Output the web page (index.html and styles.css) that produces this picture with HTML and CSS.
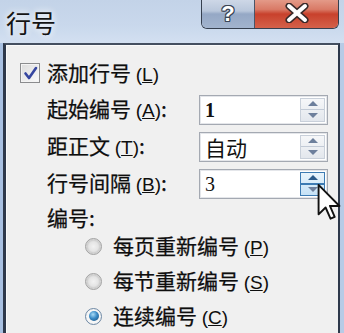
FILE: index.html
```html
<!DOCTYPE html>
<html lang="zh">
<head>
<meta charset="utf-8">
<link rel="stylesheet" href="styles.css">
</head>
<body>
<div class="window">
  <div class="titlebar">
    <span class="title">行号</span>
    <div class="caption-btns">
      <div class="cbtn help"><span class="qmark">?</span></div>
      <div class="cbtn close">
        <svg width="26" height="20" viewBox="0 0 26 20"><path d="M5 3 L21 17 M21 3 L5 17" stroke="#3a2a2a" stroke-width="7" stroke-linecap="round"/><path d="M5 3 L21 17 M21 3 L5 17" stroke="#fff" stroke-width="4" stroke-linecap="round"/></svg>
      </div>
    </div>
  </div>
  <div class="client">
    <div class="check-row">
      <span class="checkbox"><svg width="17" height="17" viewBox="0 0 17 17"><path d="M3.5 8.5 L7 13 L14 3" fill="none" stroke="#3646a0" stroke-width="2.6" stroke-linecap="round" stroke-linejoin="round"/></svg></span>
      <span class="txt">添加行号 <span class="acc">(<u>L</u>)</span></span>
    </div>
    <div class="fields">
      <div class="field">
        <span class="lbl">起始编号 <span class="acc">(<u>A</u>)</span>:</span>
        <div class="spinbox"><span class="val num">1</span><span class="spinner"><span class="up"></span><span class="down"></span></span></div>
      </div>
      <div class="field">
        <span class="lbl">距正文 <span class="acc">(<u>T</u>)</span>:</span>
        <div class="spinbox"><span class="val">自动</span><span class="spinner"><span class="up"></span><span class="down"></span></span></div>
      </div>
      <div class="field">
        <span class="lbl">行号间隔 <span class="acc">(<u>B</u>)</span>:</span>
        <div class="spinbox"><span class="val num thin">3</span><span class="spinner hot"><span class="up"></span><span class="down"></span></span></div>
      </div>
    </div>
    <div class="section">编号:</div>
    <div class="radios">
      <div class="radio-row"><span class="radio"></span><span class="txt">每页重新编号 <span class="acc">(<u>P</u>)</span></span></div>
      <div class="radio-row"><span class="radio"></span><span class="txt">每节重新编号 <span class="acc">(<u>S</u>)</span></span></div>
      <div class="radio-row"><span class="radio on"></span><span class="txt">连续编号 <span class="acc">(<u>C</u>)</span></span></div>
    </div>
  </div>
  <svg class="cursor" width="24" height="36" viewBox="0 0 12 19"><path d="M0.5 0.5 L0.5 16 L4.2 12.4 L6.8 18.3 L9 17.3 L6.5 11.6 L11.5 11.6 Z" fill="#fff" stroke="#111" stroke-width="1" stroke-linejoin="round"/></svg>
</div>
</body>
</html>
```

FILE: styles.css
```css
html, body {
  margin: 0;
  padding: 0;
  background: #f0f0f0;
}

.window {
  position: relative;
  width: 344px;
  height: 333px;
  overflow: hidden;
  display: flex;
  flex-direction: column;
  background: linear-gradient(90deg, #a9c1e2, #b7cbe6);
  font-family: "Noto Sans CJK SC", "Noto Sans", sans-serif;
  color: #0e0e0e;
}

.titlebar {
  height: 43px;
  flex: none;
  display: flex;
  justify-content: space-between;
  align-items: flex-start;
  padding: 0 5px 0 6px;
  background: linear-gradient(180deg, #c3d3e8 0%, #c9d8ec 60%, #d3e0f1 100%);
}

.title {
  margin-top: 8px;
  font-size: 25px;
  line-height: 28px;
  color: #141414;
  text-shadow: 0 0 6px rgba(255, 255, 255, 0.9), 0 0 10px rgba(255, 255, 255, 0.6);
}

.caption-btns {
  display: flex;
  margin-top: -3px;
  height: 31px;
  border: 1px solid #36404f;
  border-top: none;
  border-radius: 0 0 6px 6px;
  overflow: hidden;
}

.cbtn {
  display: flex;
  align-items: center;
  justify-content: center;
}

.cbtn.help {
  width: 52px;
  border-right: 1px solid #4a5568;
  background: linear-gradient(180deg, #d3dcea 0%, #b9c7db 45%, #95a8c5 55%, #a2b4ce 100%);
}

.qmark {
  font-family: "Liberation Sans", sans-serif;
  font-weight: bold;
  font-size: 22px;
  color: #fff;
  margin-top: 2px;
  text-shadow: 1px 0 #3a4556, -1px 0 #3a4556, 0 1px #3a4556, 0 -1px #3a4556, 1px 1px #3a4556, -1px -1px #3a4556, 1px -1px #3a4556, -1px 1px #3a4556;
}

.cbtn.close {
  width: 83px;
  background: linear-gradient(180deg, #e7a493 0%, #d97a66 40%, #c8412c 55%, #d4614a 100%);
}

.cbtn.close svg {
  margin-top: 1px;
}

.client {
  flex: 1;
  margin: 0 4px 0 3px;
  border-left: 3px solid #2e394b;
  border-right: 2px solid #2e394b;
  border-top: 2px solid #444f60;
  background: #f0f0f0;
  box-shadow: inset 1px 1px 0 #fbfbfb;
  padding: 13px 0 0 14px;
  display: flex;
  flex-direction: column;
}

.check-row {
  height: 30px;
  display: flex;
  align-items: center;
  gap: 7px;
  font-size: 21px;
}

.checkbox {
  width: 18px;
  height: 18px;
  border: 1px solid #8b8c8e;
  box-shadow: inset 0 0 0 1px #f4f4f4;
  background: linear-gradient(135deg, #dcdcdc, #fafafa);
  display: flex;
  align-items: center;
  justify-content: center;
}

.txt, .lbl, .section {
  font-size: 21px;
  line-height: 30px;
  white-space: nowrap;
  -webkit-text-stroke: 0.25px #0e0e0e;
}

.acc {
  font-family: "Liberation Sans", sans-serif;
  font-size: 19px;
  -webkit-text-stroke: 0;
}

.fields {
  margin-top: 5px;
  padding-left: 27px;
  display: flex;
  flex-direction: column;
  gap: 7px;
}

.field {
  height: 30px;
  display: grid;
  grid-template-columns: 152px 129px;
  align-items: center;
}

.spinbox {
  height: 30px;
  box-sizing: border-box;
  border: 1px solid #a4a9b2;
  box-shadow: inset 0 0 0 1px #e4e6ea;
  background: #fff;
  display: flex;
  align-items: center;
  justify-content: space-between;
  padding: 2px 2px 2px 5px;
}

.val {
  font-size: 21px;
  line-height: 26px;
  color: #111;
}

.val.num {
  font-family: "Liberation Serif", serif;
  font-weight: bold;
  font-size: 20px;
}

.val.num.thin {
  font-weight: normal;
}

.spinner {
  width: 25px;
  height: 24px;
  box-sizing: border-box;
  display: flex;
  flex-direction: column;
  border: 1px solid #c9d0da;
  background: linear-gradient(180deg, #f6f7f9, #e3e7ed);
}

.spinner .up, .spinner .down {
  flex: 1;
  display: flex;
  align-items: center;
  justify-content: center;
}

.spinner .up {
  border-bottom: 1px solid #c2cad6;
}

.spinner .up::before {
  content: "";
  border-left: 5px solid transparent;
  border-right: 5px solid transparent;
  border-bottom: 5px solid #6d7f9c;
}

.spinner .down::before {
  content: "";
  border-left: 5px solid transparent;
  border-right: 5px solid transparent;
  border-top: 5px solid #6d7f9c;
}

.spinner.hot {
  border-color: #3d7bb3;
  background: linear-gradient(180deg, #e9f4fc, #c6e2f6);
}

.spinner.hot .up {
  border-bottom: 2px solid #3d7bb3;
}

.spinner.hot .up::before {
  border-bottom-color: #2c5a8a;
}

.section {
  margin-top: 6px;
  padding-left: 27px;
  height: 28px;
  line-height: 28px;
}

.radios {
  display: flex;
  flex-direction: column;
  gap: 5px;
  padding-left: 65px;
}

.radio-row {
  height: 30px;
  display: flex;
  align-items: center;
  gap: 11px;
}

.radio {
  width: 17px;
  height: 17px;
  box-sizing: border-box;
  border-radius: 50%;
  border: 1px solid #a2a2a2;
  background: radial-gradient(circle at 50% 50%, #f2f2f2 0%, #e4e4e4 45%, #cfcfcf 60%, #f4f4f4 100%);
  display: flex;
  align-items: center;
  justify-content: center;
}

.radio.on {
  border-color: #6e88a4;
  background: radial-gradient(circle, #f6f6f6 60%, #dfe4ea 100%);
}

.radio.on::after {
  content: "";
  width: 10px;
  height: 10px;
  border-radius: 50%;
  background: radial-gradient(circle at 40% 35%, #a9dcf7 0%, #3b8bc6 45%, #174a78 100%);
}

.cursor {
  position: absolute;
  left: 317px;
  top: 184px;
}
```
